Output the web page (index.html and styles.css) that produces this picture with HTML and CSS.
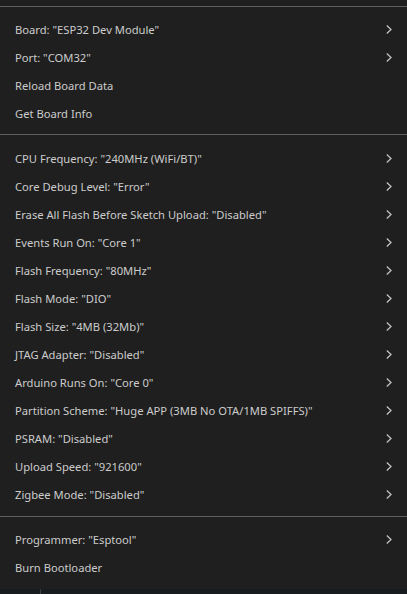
FILE: index.html
```html
<!DOCTYPE html>
<html>
<head>
<meta charset="utf-8">
<link rel="stylesheet" href="styles.css">
</head>
<body>
<div class="menu">
  <div class="sep"></div>
  <div class="group">
    <div class="item"><span>Board: "ESP32 Dev Module"</span><svg class="chev" width="6" height="9" viewBox="0 0 6 9"><path d="M0.8 0.6 L5 4.5 L0.8 8.4"/></svg></div>
    <div class="item"><span>Port: "COM32"</span><svg class="chev" width="6" height="9" viewBox="0 0 6 9"><path d="M0.8 0.6 L5 4.5 L0.8 8.4"/></svg></div>
    <div class="item"><span>Reload Board Data</span></div>
    <div class="item"><span>Get Board Info</span></div>
  </div>
  <div class="sep"></div>
  <div class="group mid">
    <div class="item"><span>CPU Frequency: "240MHz (WiFi/BT)"</span><svg class="chev" width="6" height="9" viewBox="0 0 6 9"><path d="M0.8 0.6 L5 4.5 L0.8 8.4"/></svg></div>
    <div class="item"><span>Core Debug Level: "Error"</span><svg class="chev" width="6" height="9" viewBox="0 0 6 9"><path d="M0.8 0.6 L5 4.5 L0.8 8.4"/></svg></div>
    <div class="item"><span>Erase All Flash Before Sketch Upload: "Disabled"</span><svg class="chev" width="6" height="9" viewBox="0 0 6 9"><path d="M0.8 0.6 L5 4.5 L0.8 8.4"/></svg></div>
    <div class="item"><span>Events Run On: "Core 1"</span><svg class="chev" width="6" height="9" viewBox="0 0 6 9"><path d="M0.8 0.6 L5 4.5 L0.8 8.4"/></svg></div>
    <div class="item"><span>Flash Frequency: "80MHz"</span><svg class="chev" width="6" height="9" viewBox="0 0 6 9"><path d="M0.8 0.6 L5 4.5 L0.8 8.4"/></svg></div>
    <div class="item"><span>Flash Mode: "DIO"</span><svg class="chev" width="6" height="9" viewBox="0 0 6 9"><path d="M0.8 0.6 L5 4.5 L0.8 8.4"/></svg></div>
    <div class="item"><span>Flash Size: "4MB (32Mb)"</span><svg class="chev" width="6" height="9" viewBox="0 0 6 9"><path d="M0.8 0.6 L5 4.5 L0.8 8.4"/></svg></div>
    <div class="item"><span>JTAG Adapter: "Disabled"</span><svg class="chev" width="6" height="9" viewBox="0 0 6 9"><path d="M0.8 0.6 L5 4.5 L0.8 8.4"/></svg></div>
    <div class="item"><span>Arduino Runs On: "Core 0"</span><svg class="chev" width="6" height="9" viewBox="0 0 6 9"><path d="M0.8 0.6 L5 4.5 L0.8 8.4"/></svg></div>
    <div class="item"><span>Partition Scheme: "Huge APP (3MB No OTA/1MB SPIFFS)"</span><svg class="chev" width="6" height="9" viewBox="0 0 6 9"><path d="M0.8 0.6 L5 4.5 L0.8 8.4"/></svg></div>
    <div class="item"><span>PSRAM: "Disabled"</span><svg class="chev" width="6" height="9" viewBox="0 0 6 9"><path d="M0.8 0.6 L5 4.5 L0.8 8.4"/></svg></div>
    <div class="item"><span>Upload Speed: "921600"</span><svg class="chev" width="6" height="9" viewBox="0 0 6 9"><path d="M0.8 0.6 L5 4.5 L0.8 8.4"/></svg></div>
    <div class="item"><span>Zigbee Mode: "Disabled"</span><svg class="chev" width="6" height="9" viewBox="0 0 6 9"><path d="M0.8 0.6 L5 4.5 L0.8 8.4"/></svg></div>
  </div>
  <div class="sep"></div>
  <div class="group">
    <div class="item"><span>Programmer: "Esptool"</span><svg class="chev" width="6" height="9" viewBox="0 0 6 9"><path d="M0.8 0.6 L5 4.5 L0.8 8.4"/></svg></div>
    <div class="item"><span>Burn Bootloader</span></div>
  </div>
</div>
<div class="under"><div class="under-line"></div></div>
</body>
</html>
```
FILE: styles.css
```css
html, body {
  margin: 0;
  padding: 0;
  background: #1f1f1f;
  height: 594px;
  overflow: hidden;
}
.menu {
  background: #1f1f1f;
  color: #cccccc;
  font-family: "Noto Sans", "Open Sans", sans-serif;
  font-size: 11.2px;
  padding-bottom: 7px;
}
.sep {
  height: 1px;
  background: #5f5f5f;
  margin: 6px 0 9px;
}
.group.mid {
  padding: 1px 0;
}
.item {
  height: 28px;
  display: flex;
  align-items: center;
  justify-content: space-between;
  padding: 0 15px 0 15px;
}
.item span {
  line-height: 16px;
}
.chev {
  display: block;
  margin-top: -1px;
}
.chev path {
  fill: none;
  stroke: #c0c0c0;
  stroke-width: 1.3;
}
.under {
  height: 5px;
  background: #181c1f;
  display: flex;
  padding-left: 40px;
}
.under-line {
  width: 1px;
  background: #3a3f42;
}
```
